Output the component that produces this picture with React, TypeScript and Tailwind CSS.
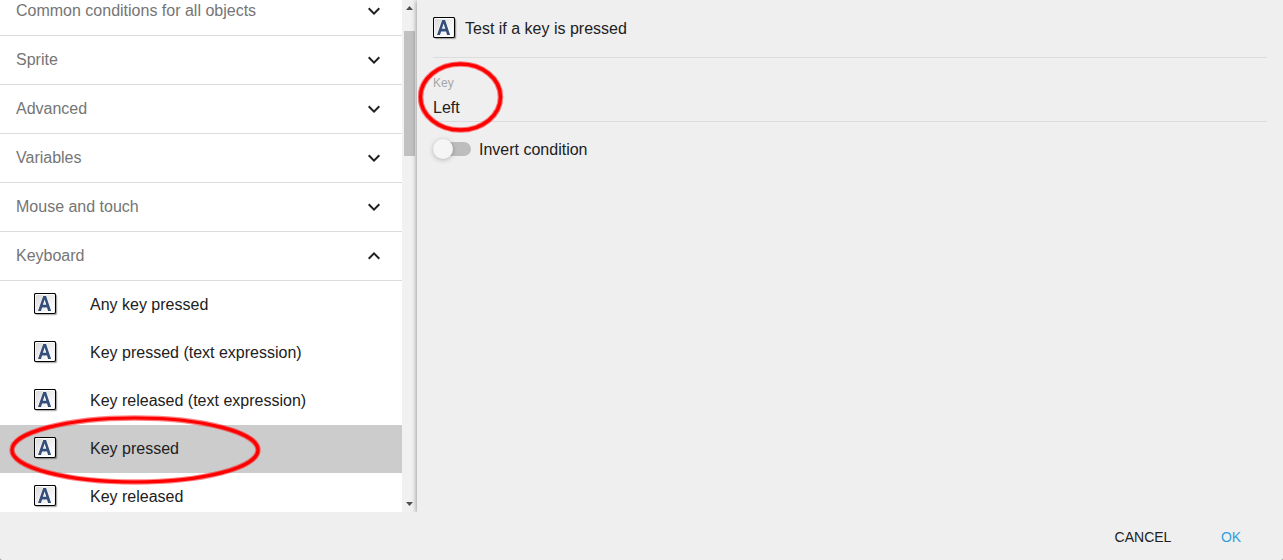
import { useState } from "react";

const groups = [
  "Common conditions for all objects",
  "Sprite",
  "Advanced",
  "Variables",
  "Mouse and touch",
  "Keyboard",
];

const keyboardConditions = [
  "Any key pressed",
  "Key pressed (text expression)",
  "Key released (text expression)",
  "Key pressed",
  "Key released",
];

function KeyIcon() {
  return (
    <svg viewBox="0 0 24 24" className="size-6 shrink-0" aria-hidden="true">
      <defs>
        <linearGradient id="keycap" x1="0" y1="0" x2="1" y2="1">
          <stop offset="0" stopColor="#dcdcdc" />
          <stop offset="0.7" stopColor="#f6f6f6" />
          <stop offset="1" stopColor="#ffffff" />
        </linearGradient>
      </defs>
      <rect x="2" y="2" width="21.6" height="20.6" rx="2" fill="#000" opacity="0.13" />
      <rect x="1" y="1" width="21.8" height="20.8" rx="1.6" fill="#000" opacity="0.25" />
      <rect x="0.5" y="0.5" width="21" height="20" rx="1.4" fill="#fff" stroke="#000" strokeWidth="1.1" />
      <rect x="2" y="2" width="18" height="17" fill="url(#keycap)" />
      <path
        d="M9.2 3h2.9l5 15h-3l-1.1-3.6H8.1L7 18H4zM10.6 6.6l-1.7 5.2h3.4z"
        fill="#344f7b"
        stroke="#fff"
        strokeOpacity="0.7"
        strokeWidth="1.2"
        paintOrder="stroke"
        fillRule="evenodd"
      />
    </svg>
  );
}

function Chevron({ open }: { open: boolean }) {
  return (
    <svg viewBox="0 0 24 24" className="size-6" fill="#212121" aria-hidden="true">
      <path
        d={
          open
            ? "M7.41 15.41L12 10.83l4.59 4.58L18 14l-6-6-6 6z"
            : "M7.41 8.59L12 13.17l4.59-4.58L18 10l-6 6-6-6z"
        }
      />
    </svg>
  );
}

function ScrollBar() {
  return (
    <div className="flex w-[15px] shrink-0 flex-col items-center bg-[#f1f1f1]" aria-hidden="true">
      <svg viewBox="0 0 15 16" className="h-4 w-[15px] shrink-0">
        <path d="M4 10h7L7.5 6z" fill="#505050" />
      </svg>
      <div className="mt-[15px] h-[125px] w-[11px] bg-[#c1c1c1]" />
      <svg viewBox="0 0 15 16" className="mt-auto h-4 w-[15px] shrink-0">
        <path d="M4 6h7l-3.5 4z" fill="#505050" />
      </svg>
    </div>
  );
}

export default function App() {
  const [selected, setSelected] = useState("Key pressed");
  const [keyName, setKeyName] = useState("Left");
  const [inverted, setInverted] = useState(false);

  return (
    <div className="h-screen bg-[#808080]">
      <div className="flex h-full flex-col overflow-hidden rounded-b-xs bg-[#efefef] font-['Liberation_Sans',Arial,sans-serif] text-base text-[#212121]">
        <main className="flex min-h-0 flex-1 overflow-hidden">
          <section className="flex w-[417px] shrink-0">
            <div className="min-w-0 flex-1 overflow-hidden bg-white">
              <div className="-mt-[13px]">
                {groups.map((name) => (
                  <button
                    key={name}
                    type="button"
                    aria-expanded={name === "Keyboard"}
                    className="flex w-full items-center justify-between border-b border-[#dcdcdc] px-4 py-3 text-left text-[#757575]"
                  >
                    {name}
                    <Chevron open={name === "Keyboard"} />
                  </button>
                ))}
                <ul>
                  {keyboardConditions.map((name) => (
                    <li key={name} className="relative">
                      <button
                        type="button"
                        onClick={() => setSelected(name)}
                        className={`flex h-12 w-full items-center gap-8 pl-[34px] text-left ${
                          selected === name ? "bg-[#cccccc]" : "bg-white"
                        }`}
                      >
                        <KeyIcon />
                        {name}
                      </button>
                      {name === "Key pressed" && (
                        <svg
                          viewBox="0 0 252 70"
                          className="pointer-events-none absolute -top-2.5 left-[9px] z-10 h-[70px] w-[252px]"
                          fill="none"
                          stroke="#ff0000"
                          aria-hidden="true"
                        >
                          <ellipse cx="126" cy="35" rx="123" ry="32" strokeWidth="5.4" opacity="0.5" />
                          <ellipse cx="126" cy="35" rx="123" ry="32" strokeWidth="3.2" />
                        </svg>
                      )}
                    </li>
                  ))}
                </ul>
              </div>
            </div>
            <ScrollBar />
          </section>

          <section className="relative min-w-0 flex-1 bg-[#efefef] px-4 shadow-[0_1px_6px_rgba(0,0,0,0.28),0_1px_4px_rgba(0,0,0,0.22)]">
            <header className="flex h-[58px] items-center gap-2 border-b border-[#dcdcdc]">
              <KeyIcon />
              <h1>Test if a key is pressed</h1>
            </header>

            <div className="relative flex h-16 flex-col border-b border-[#dcdcdc] pt-4">
              <label htmlFor="key" className="text-xs leading-[18px] text-[#a6a6a6]">
                Key
              </label>
              <input
                id="key"
                type="text"
                value={keyName}
                onChange={(event) => setKeyName(event.target.value)}
                className="w-full bg-transparent pt-1 outline-none"
              />
              <svg
                viewBox="0 0 86 74"
                className="pointer-events-none absolute top-0.5 -left-[15px] h-[74px] w-[86px]"
                fill="none"
                stroke="#ff0000"
                aria-hidden="true"
              >
                <ellipse cx="42.5" cy="37" rx="40" ry="33" strokeWidth="5.6" opacity="0.5" />
                <ellipse cx="42.5" cy="37" rx="40" ry="33" strokeWidth="3.4" />
              </svg>
            </div>

            <label className="mt-4 flex h-6 items-center gap-2">
              <input
                type="checkbox"
                role="switch"
                checked={inverted}
                onChange={(event) => setInverted(event.target.checked)}
                className="peer sr-only"
              />
              <span className="mb-0.5 flex h-3.5 w-[38px] items-center rounded-r-full bg-[linear-gradient(#bdbdbd,#bdbdbd)] bg-[length:34px_14px] bg-right bg-no-repeat peer-checked:justify-end">
                <span className="size-5 rounded-full bg-[#f5f5f5] shadow-[0_1px_5px_rgba(0,0,0,0.25)]" />
              </span>
              Invert condition
            </label>
          </section>
        </main>

        <footer className="flex h-12 shrink-0 items-center justify-end px-2 pt-0.5 text-sm">
          <button type="button" className="h-9 w-[88px]">
            CANCEL
          </button>
          <button type="button" className="h-9 w-[88px] text-[#2f9fe0]">
            OK
          </button>
        </footer>
      </div>
    </div>
  );
}
